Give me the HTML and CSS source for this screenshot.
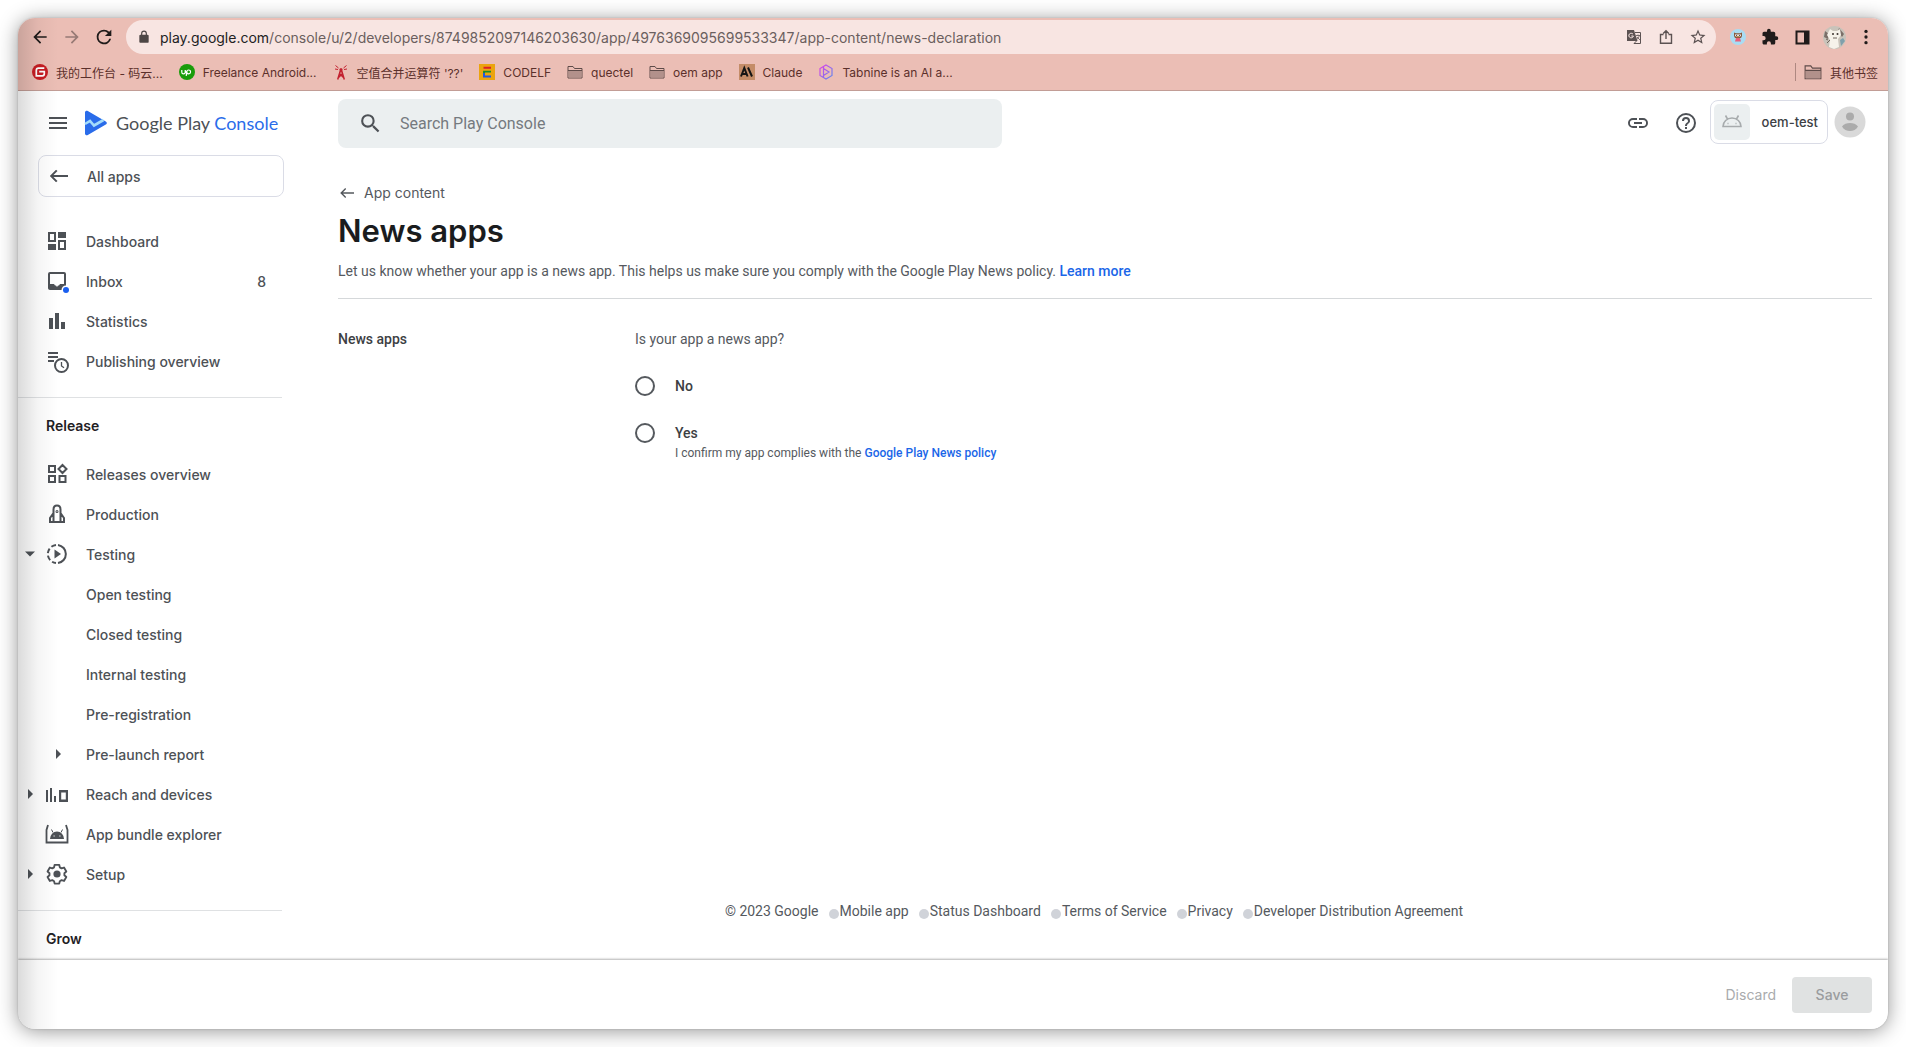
FILE: index.html
```html
<!DOCTYPE html>
<html lang="en">
<head>
    <meta charset="UTF-8">
    <meta name="viewport" content="width=device-width, initial-scale=1.0">
    <title>News apps | Google Play Console</title>
    <link rel="stylesheet" href="styles.css">
</head>
<body>
<div class="window">

    <!-- Browser toolbar -->
    <div class="browser">
        <div class="toolbar">
            <button class="tool" aria-label="Back"><svg width="20" height="20" viewBox="0 0 24 24"><path d="M20 11H7.830l5.590-5.590L12 4l-8 8 8 8 1.410-1.410L7.830 13H20z"/></svg></button>
            <button class="tool tool-off" aria-label="Forward"><svg width="20" height="20" viewBox="0 0 24 24"><path d="M12 4l-1.410 1.410L16.170 11H4v2h12.170l-5.580 5.590L12 20l8-8z"/></svg></button>
            <button class="tool" aria-label="Reload"><svg width="22" height="22" viewBox="0 0 24 24"><path d="M17.650 6.350A7.960 7.960 0 0 0 12 4a8 8 0 1 0 7.730 10h-2.080A6 6 0 1 1 12 6c1.660 0 3.140.69 4.220 1.780L13 11h7V4z"/></svg></button>
            <div class="address">
                <svg class="lock" width="14" height="14" viewBox="0 0 24 24"><path d="M18 8h-1V6A5 5 0 0 0 7 6v2H6a2 2 0 0 0-2 2v10c0 1.100.9 2 2 2h12a2 2 0 0 0 2-2V10a2 2 0 0 0-2-2zM9 6a3 3 0 0 1 6 0v2H9z"/></svg>
                <div class="url" role="textbox" aria-label="Address"><span class="host">play.google.com</span>/console/u/2/developers/8749852097146203630/app/4976369095699533347/app-content/news-declaration</div>
                <button class="tool tool-soft" aria-label="Translate">
                    <svg width="16" height="16" viewBox="0 0 16 16">
                        <path d="M1 1h7l3.500 11H1z"/>
                        <path d="M9 3.500h5.500v11H8l2.500-2.500" fill="none" stroke="#5c5252"/>
                        <path d="M10 6.500h4M12 5.500v1M13.300 6.500c-.4 1.800-1.300 3-2.300 3.800M11 8l3 3" fill="none" stroke="#5c5252" stroke-width=".8"/>
                        <path d="M7 5.200A2.300 2.300 0 1 0 7.400 7H5.300" fill="none" stroke="#f8e5e2"/>
                    </svg>
                </button>
                <button class="tool tool-soft" aria-label="Share"><svg width="16" height="16" viewBox="0 0 16 16" fill="none" stroke="#5c5252" stroke-width="1.400"><path d="M5.500 5.500h-3v8.700h11V5.500h-3M8 10V2M5.200 4.500L8 1.700l2.800 2.800"/></svg></button>
                <button class="tool tool-soft" aria-label="Bookmark"><svg width="18" height="18" viewBox="0 0 24 24"><path d="M22 9.240l-7.190-.62L12 2 9.190 8.630 2 9.240l5.460 4.730L5.820 21 12 17.270 18.180 21l-1.630-7.030zM12 15.400l-3.760 2.270 1-4.280-3.320-2.880 4.380-.38L12 6.100l1.710 4.040 4.380.38-3.320 2.880 1 4.280z"/></svg></button>
            </div>
            <button class="tool" aria-label="Extension">
                <svg width="16" height="16" viewBox="0 0 16 16">
                    <circle cx="8" cy="8" r="8" fill="#a9dcf3"/>
                    <path d="M4 3.500l2 .8h4l2-.8v3.500l-1 2H5L4 7z" fill="#8a5a3c"/>
                    <circle cx="6.500" cy="6.200" r="1.300" fill="#fff"/><circle cx="9.500" cy="6.200" r="1.300" fill="#fff"/>
                    <circle cx="6.500" cy="6.200" r=".6"/><circle cx="9.500" cy="6.200" r=".6"/>
                    <path d="M6 9h4l1 3.500H5z" fill="#e8607a"/><path d="M7.300 7.300h1.400L8 8.500z" fill="#f4b942"/>
                </svg>
            </button>
            <button class="tool" aria-label="Extensions"><svg width="18" height="18" viewBox="0 0 24 24"><path d="M20.500 11H19V7a2 2 0 0 0-2-2h-4V3.500a2.500 2.500 0 0 0-5 0V5H4a2 2 0 0 0-2 2v3.800h1.500a2.700 2.700 0 0 1 0 5.400H2V20c0 1.100.9 2 2 2h3.800v-1.500a2.700 2.700 0 0 1 5.400 0V22H17a2 2 0 0 0 2-2v-4h1.500a2.500 2.500 0 0 0 0-5z"/></svg></button>
            <button class="tool" aria-label="Side panel"><svg width="15" height="15" viewBox="0 0 15 15"><path d="M.500 .500h14v14H.500zM2.500 2.500v10h6.500v-10z" fill-rule="evenodd"/></svg></button>
            <button class="tool" aria-label="Profile">
                <svg width="23" height="23" viewBox="0 0 23 23">
                    <circle cx="11.500" cy="11.500" r="11.500" fill="#c9c3ba"/>
                    <path d="M2 5l4 3-1 5-4-2zM16 2l5 6-2 3-4-6z" fill="#7b6f68"/>
                    <path d="M20 12l2 3-4 5-1-6z" fill="#7fa0ac"/>
                    <path d="M7 3l3 2h4l3-2 1 6-3 4 1 8-5 2-5-2 1-7-3-5z" fill="#f6f2ea"/>
                    <circle cx="10" cy="8" r="1" fill="#3b332e"/><circle cx="14.500" cy="8" r="1" fill="#3b332e"/>
                    <path d="M10 12h4M4 17l3-3M3 13l2 1" stroke="#6f655c" stroke-width="1"/>
                </svg>
            </button>
            <button class="tool" aria-label="Menu"><svg width="18" height="18" viewBox="0 0 24 24"><circle cx="12" cy="4.500" r="2.200"/><circle cx="12" cy="12" r="2.200"/><circle cx="12" cy="19.500" r="2.200"/></svg></button>
        </div>

        <nav class="bookmarks">
            <a href="#">
                <svg width="16" height="16" viewBox="0 0 16 16"><circle cx="8" cy="8" r="8" fill="#c71d23"/><path d="M12.300 4.200H6.600a2.300 2.300 0 0 0-2.300 2.300v5.300h6a2 2 0 0 0 2-2V7.700H7.200" fill="none" stroke="#fff" stroke-width="1.700"/></svg>
                我的工作台 - 码云...
            </a>
            <a href="#">
                <svg width="16" height="16" viewBox="0 0 16 16"><circle cx="8" cy="8" r="8" fill="#1a9c0a"/><path d="M2.800 6v2.200a1.700 1.700 0 0 0 3.400 0V6M6.200 6.500c1 2.500 2 3.300 3.400 3.300a1.900 1.900 0 1 0-1.800-2.200L7.200 12" fill="none" stroke="#fff" stroke-width="1.200"/></svg>
                Freelance Android...
            </a>
            <a href="#">
                <svg width="16" height="16" viewBox="0 0 16 16" fill="none" stroke="#c3202f"><path d="M8 4.500L4.700 15.500M8 4.500l3.300 11M6.500 9.500l4 4M9.500 9.500l-4 4" stroke-width="1.500"/><path d="M6.500 5.500h3M7 7.500h2" stroke-width="1.500"/><path d="M5.500 4L2.500 1.500M10.500 4l3-2.500M5 5.500L2 5M11 5.500l3-.5"/></svg>
                空值合并运算符 '??'
            </a>
            <a href="#">
                <svg width="16" height="16" viewBox="0 0 16 16"><path d="M0 0h16v16H0z" fill="#eba40f"/><path d="M4.500 3.800H12" stroke="#dd1f26" stroke-width="2"/><path d="M12 7.600H5v2" fill="none" stroke="#178a2c" stroke-width="1.800"/><path d="M5 9v3.400h7" fill="none" stroke="#2157e0" stroke-width="2"/></svg>
                CODELF
            </a>
            <a href="#">
                <svg width="16" height="16" viewBox="0 0 16 16"><path d="M1 14V2.500h5l1.500 2H15V14z" fill="none" stroke="#5e4b49"/><path d="M1.500 6.500h13v7h-13z" fill="#b2918b"/><path d="M1 6.500h14" stroke="#5e4b49"/></svg>
                quectel
            </a>
            <a href="#">
                <svg width="16" height="16" viewBox="0 0 16 16"><path d="M1 14V2.500h5l1.500 2H15V14z" fill="none" stroke="#5e4b49"/><path d="M1.500 6.500h13v7h-13z" fill="#b2918b"/><path d="M1 6.500h14" stroke="#5e4b49"/></svg>
                oem app
            </a>
            <a href="#">
                <svg width="16" height="16" viewBox="0 0 16 16"><path d="M0 0h16v16H0z" fill="#c48c68"/><path d="M2 12.500L5.300 4l3.300 8.500M3.300 10h4M9 3.500l4 9" fill="none" stroke="#141414" stroke-width="2"/></svg>
                Claude
            </a>
            <a href="#">
                <svg width="16" height="16" viewBox="0 0 16 16" fill="none"><defs><linearGradient id="tab" x1="0" y1="0" x2="1" y2="1"><stop offset="0" stop-color="#e03be8"/><stop offset="1" stop-color="#5b8dee"/></linearGradient></defs><path d="M8 1l6 3.500v7L8 15l-6-3.500v-7zM5.500 3v10M5.500 4.500L11 8l-5.500 3.500" stroke="url(#tab)" stroke-width="1.200"/></svg>
                Tabnine is an AI a...
            </a>
            <a class="other" href="#">
                <svg width="18" height="18" viewBox="0 0 16 16"><path d="M1 14V2.500h5l1.500 2H15V14z" fill="none" stroke="#5e4b49"/><path d="M1.500 6.500h13v7h-13z" fill="#b2918b"/><path d="M1 6.500h14" stroke="#5e4b49"/></svg>
                其他书签
            </a>
        </nav>
    </div>

    <!-- Console header -->
    <header class="header">
        <div class="brand">
            <button class="icon-btn" aria-label="Main menu"><svg width="20" height="20" viewBox="0 0 20 20"><path d="M1 4h18v2H1zM1 9h18v2H1zM1 14h18v2H1z"/></svg></button>
            <a class="logo" href="#">
                <svg width="24" height="26" viewBox="0 0 24 26"><path d="M1 2.500C1 1 2.500.3 3.800 1l18 10.400c1.400.8 1.400 2.400 0 3.200L3.800 25C2.500 25.700 1 25 1 23.500z" fill="#2a6cea"/><path d="M1 14l5-3 4 4.500L19.500 10" fill="none" stroke="#a3dcfb" stroke-width="2.600"/></svg>
                <span>Google Play <b>Console</b></span>
            </a>
        </div>
        <label class="search">
            <svg width="25" height="25" viewBox="0 0 24 24"><path d="M15.500 14h-.79l-.28-.27A6.470 6.470 0 0 0 16 9.500 6.500 6.500 0 1 0 9.500 16c1.610 0 3.090-.59 4.230-1.570l.27.28v.79l5 4.990L20.490 19zm-6 0a4.500 4.500 0 1 1 0-9 4.500 4.500 0 0 1 0 9z"/></svg>
            <input type="text" placeholder="Search Play Console" aria-label="Search Play Console">
        </label>
        <div class="header-tools">
            <button class="icon-btn" aria-label="Copy link"><svg width="24" height="24" viewBox="0 0 24 24"><path d="M3.900 12A3.100 3.100 0 0 1 7 8.900h4V7H7a5 5 0 0 0 0 10h4v-1.900H7A3.100 3.100 0 0 1 3.900 12zM8 13h8v-2H8zm9-6h-4v1.900h4a3.100 3.100 0 0 1 0 6.200h-4V17h4a5 5 0 0 0 0-10z"/></svg></button>
            <button class="icon-btn" aria-label="Help"><svg width="24" height="24" viewBox="0 0 24 24"><path d="M11 18h2v-2h-2zm1-16a10 10 0 1 0 0 20 10 10 0 0 0 0-20zm0 18a8 8 0 1 1 0-16 8 8 0 0 1 0 16zm0-14a4 4 0 0 0-4 4h2a2 2 0 1 1 4 0c0 2-3 1.750-3 5h2c0-2.250 3-2.500 3-5a4 4 0 0 0-4-4z"/></svg></button>
            <div class="account">
                <button class="app-picker">
                    <span class="app-icon"><svg width="24" height="24" viewBox="0 0 24 24" fill="none" stroke="#a7abad" stroke-width="1.600"><path d="M3 16.500a9 8.500 0 0 1 18 0zM7.500 9L5.500 5.500M16.500 9l2-3.500"/><path d="M7.500 13.500h1M15.500 13.500h1"/></svg></span>
                    oem-test
                </button>
                <button class="avatar" aria-label="Account"><svg width="32" height="32" viewBox="0 0 32 32"><circle cx="16" cy="16" r="15.500" fill="#d9d9d9"/><circle cx="16" cy="10.500" r="4" fill="#ababab"/><path d="M8 20.500c1.500-2.500 5-3.500 8-3.500s6.500 1 8 3.500c-1.500 3-5 4.500-8 4.500s-6.500-1.500-8-4.500z" fill="#ababab"/></svg></button>
            </div>
        </div>
    </header>

    <div class="page">
        <nav class="sidebar">
            <a class="all-apps" href="#"><svg width="20" height="20" viewBox="0 0 20 20"><path d="M19 9H4.500l4-4L7 3.700 .800 10 7 16.300l1.500-1.300-4-4H19z"/></svg>All apps</a>

            <ul class="menu">
                <li><a href="#"><span class="arrow"></span><svg width="24" height="24" viewBox="0 0 24 24"><path d="M3 3h8v10H3zM5 5v6h4V5zM13 3h8v6h-8zM3 15h8v6H3zM13 11h8v10h-8zM15 13v6h4v-6z" fill-rule="evenodd"/></svg>Dashboard</a></li>
                <li><a href="#"><span class="arrow"></span><svg width="24" height="24" viewBox="0 0 24 24"><path d="M19 3H5a2 2 0 0 0-2 2v14c0 1.100.9 2 2 2h14a2 2 0 0 0 2-2V5a2 2 0 0 0-2-2zM5 5h14v10h-4l-1 1.500h-1L12 18l-1-1.500h-1L9 15H5z" fill-rule="evenodd"/><circle cx="21" cy="21" r="4.500" fill="#fff"/><circle cx="21" cy="21" r="3" fill="#1a5ff0"/></svg>Inbox<span class="count">8</span></a></li>
                <li><a href="#"><span class="arrow"></span><svg width="24" height="24" viewBox="0 0 24 24"><path d="M4 9h4v11H4zM10 4h4v16h-4zM16 13h4v7h-4z"/></svg>Statistics</a></li>
                <li><a href="#"><span class="arrow"></span><svg width="24" height="24" viewBox="0 0 24 24"><path d="M3 3h10v2H3zM3 7h10v2H3zM3 11h6v2H3z"/><circle cx="16.500" cy="16.500" r="6.500" fill="#fff" stroke="#4d5156" stroke-width="2"/><path d="M16.500 13v4l2.500 1.800" fill="none" stroke="#4d5156" stroke-width="1.300"/></svg>Publishing overview</a></li>
            </ul>

            <h2>Release</h2>
            <ul class="menu">
                <li><a href="#"><span class="arrow"></span><svg width="24" height="24" viewBox="0 0 24 24" fill="none" stroke="#4d5156" stroke-width="2"><path d="M4 4h6v6H4zM4 14h6v6H4zM14.500 14h6v6h-6zM17.500 3l4 4-4 4-4-4z"/></svg>Releases overview</a></li>
                <li><a href="#"><span class="arrow"></span><svg width="24" height="24" viewBox="0 0 24 24" fill="none" stroke="#4d5156" stroke-width="2"><path d="M8.500 20V7.500C8.500 5 10 3.500 12 3.500S15.500 5 15.500 7.500V20zM8.500 11L5 16v4h14v-4l-3.500-5"/><circle cx="12" cy="9.500" r=".5"/></svg>Production</a></li>
                <li><a href="#"><span class="arrow open"></span><svg width="24" height="24" viewBox="0 0 24 24"><path d="M13 2.900a9.200 9.200 0 0 1 0 18.200" fill="none" stroke="#4d5156" stroke-width="2"/><path d="M11 2.900a9.200 9.200 0 0 0-8.200 9.100A9.200 9.200 0 0 0 11 21.100" fill="none" stroke="#4d5156" stroke-width="2" stroke-dasharray="5 2.500"/><path d="M9.500 7.500v9l6.500-4.500z"/></svg>Testing</a></li>
                <li><a class="sub" href="#">Open testing</a></li>
                <li><a class="sub" href="#">Closed testing</a></li>
                <li><a class="sub" href="#">Internal testing</a></li>
                <li><a class="sub" href="#">Pre-registration</a></li>
                <li><a class="nested" href="#"><span class="arrow closed"></span>Pre-launch report</a></li>
                <li><a href="#"><span class="arrow closed"></span><svg width="24" height="24" viewBox="0 0 24 24"><path d="M1 8h2v12H1zM5 6h2v14H5zM9 14h2v6H9zM14 8h9v12h-9zM16.200 10.500v7h4.600v-7z" fill-rule="evenodd"/></svg>Reach and devices</a></li>
                <li><a href="#"><span class="arrow"></span><svg width="24" height="24" viewBox="0 0 24 24"><path d="M3 3l-1.500 5v12.500h21V8L21 3" fill="none" stroke="#4d5156" stroke-width="1.800"/><path d="M5 17a7 7.500 0 0 1 14 0z"/><path d="M8 10.500L6.500 7.500M16 10.500l1.500-3" stroke="#4d5156"/><path d="M8.500 14h1.200M14.300 14h1.200" stroke="#fff"/></svg>App bundle explorer</a></li>
                <li><a href="#"><span class="arrow closed"></span><svg width="24" height="24" viewBox="0 0 24 24"><path d="M9.500 2.500h5l.6 2.800 1.900 1.100 2.700-.9 2.500 4.300-2.100 1.900v2.200l2.100 1.900-2.500 4.300-2.700-.9-1.900 1.100-.6 2.700h-5l-.6-2.700L7 19.200l-2.700.9-2.500-4.300 2.100-1.900v-2.200L1.800 9.800l2.500-4.300 2.700.9 1.900-1.100z" fill="none" stroke="#4d5156" stroke-width="2" stroke-linejoin="round" transform="translate(.9 .5) scale(.92)"/><circle cx="12" cy="12" r="3.600"/></svg>Setup</a></li>
            </ul>

            <h2>Grow</h2>
        </nav>

        <main class="main">
            <a class="crumb" href="#"><svg width="18" height="16" viewBox="0 0 18 16"><path d="M16 7.300H5l3.200-3.200L7.200 3 2.200 8l5 5 1-1.100L5 8.700h11z"/></svg>App content</a>
            <h1>News apps</h1>
            <p class="intro">Let us know whether your app is a news app. This helps us make sure you comply with the Google Play News policy. <a href="#">Learn more</a></p>

            <form class="declaration">
                <h3>News apps</h3>
                <fieldset>
                    <legend>Is your app a news app?</legend>
                    <div class="option">
                        <input type="radio" name="news" id="news-no">
                        <label for="news-no">No</label>
                    </div>
                    <div class="option">
                        <input type="radio" name="news" id="news-yes">
                        <label for="news-yes">Yes</label>
                        <p class="hint">I confirm my app complies with the <a href="#">Google Play News policy</a></p>
                    </div>
                </fieldset>
            </form>

            <footer class="footer">
                <span>© 2023 Google</span>
                <a href="#">Mobile app</a>
                <a href="#">Status Dashboard</a>
                <a href="#">Terms of Service</a>
                <a href="#">Privacy</a>
                <a href="#">Developer Distribution Agreement</a>
            </footer>
        </main>
    </div>

    <div class="actions">
        <button class="discard" disabled>Discard</button>
        <button class="save" disabled>Save</button>
    </div>
</div>
</body>
</html>
```
FILE: styles.css
```css
* {
    box-sizing: border-box;
}

body {
    margin: 0;
    padding: 18px;
    height: 100vh;
    background: #fff;
    font-family: Roboto, "Noto Sans CJK SC", sans-serif;
    font-size: 14px;
    color: #55595e;
}

a {
    color: inherit;
    text-decoration: none;
}

button {
    padding: 0;
    border: none;
    background: none;
    font: inherit;
    color: inherit;
}

svg {
    display: block;
    flex: none;
    fill: currentColor;
}

svg[fill="none"] {
    fill: none;
}

.window {
    position: relative;
    display: flex;
    flex-direction: column;
    height: 100%;
    background: #fff;
    border-radius: 17px;
    overflow: hidden;
    box-shadow: 0 2px 20px rgba(0, 0, 0, 0.42), 0 0 2px rgba(0, 0, 0, 0.2);
}

/* soft shade along the left edge */
.window::after {
    content: "";
    position: absolute;
    top: 0;
    bottom: 0;
    left: 0;
    width: 40px;
    background: linear-gradient(to right, rgba(0, 0, 0, 0.14), rgba(0, 0, 0, 0.04) 50%, transparent);
    pointer-events: none;
}

/* browser */
.browser {
    background: #ebbeb5;
    border-bottom: 1px solid #c29d96;
    color: #1f1b1a;
}

.toolbar {
    display: flex;
    align-items: center;
    padding: 2px 6px 0;
}

.tool {
    display: flex;
    align-items: center;
    justify-content: center;
    width: 32px;
    height: 34px;
}

.tool-off {
    color: #977a75;
}

.tool-soft {
    color: #5c5252;
}

.address {
    display: flex;
    align-items: center;
    flex: 1;
    min-width: 0;
    height: 34px;
    margin: 0 6px;
    padding: 0 2px 0 11px;
    background: #f8e5e2;
    border-radius: 17px;
}

.lock {
    color: #4d4645;
}

.url {
    flex: 1;
    min-width: 0;
    margin-left: 9px;
    overflow: hidden;
    white-space: nowrap;
    font-family: Inter, sans-serif;
    font-size: 14px;
    color: #6b5f5e;
}

.host {
    color: #222;
}

.bookmarks {
    display: flex;
    align-items: center;
    gap: 16px;
    height: 36px;
    padding: 0 10px 0 14px;
    font-family: Inter, "Noto Sans CJK SC", sans-serif;
    font-size: 12px;
    color: #5b302b;
    white-space: nowrap;
}

.bookmarks a {
    display: flex;
    align-items: center;
    gap: 8px;
}

.bookmarks .other {
    margin-left: auto;
    padding-left: 8px;
    border-left: 1px solid #ae8881;
}

/* console header */
.header {
    display: flex;
    align-items: center;
    height: 64px;
    padding-right: 22px;
    color: #4d5156;
}

.brand {
    display: flex;
    align-items: center;
    gap: 16px;
    width: 320px;
    padding-left: 30px;
}

.logo {
    display: flex;
    align-items: center;
    gap: 8px;
    font-family: Lato, sans-serif;
    font-size: 18px;
    white-space: nowrap;
}

.logo b {
    font-weight: 400;
    color: #2a6cea;
}

.search {
    display: flex;
    align-items: center;
    flex: 0 1 664px;
    height: 49px;
    padding-left: 20px;
    background: #ebeff0;
    border-radius: 8px;
}

.search input {
    flex: 1;
    margin-left: 17px;
    padding: 0;
    border: none;
    outline: none;
    background: none;
    font-family: Roboto, sans-serif;
    font-size: 16px;
    color: #3c4043;
}

.search input::placeholder {
    color: #757a7f;
}

.header-tools {
    display: flex;
    align-items: center;
    gap: 24px;
    margin-left: auto;
}

.account {
    display: flex;
    align-items: center;
    gap: 6px;
    margin: 0 0 3px -12px;
}

.app-picker {
    display: flex;
    align-items: center;
    gap: 12px;
    height: 44px;
    padding: 0 9px 0 3px;
    border: 1px solid #dadce6;
    border-radius: 8px;
    font-family: Inter, sans-serif;
    font-size: 13px;
    font-weight: 500;
    color: #3c4043;
}

.app-icon {
    display: grid;
    place-items: center;
    width: 36px;
    height: 36px;
    background: #ebeff0;
    border-radius: 5px;
}

/* layout under the header */
.page {
    display: flex;
    flex: 1;
    min-height: 0;
    overflow: hidden;
}

.sidebar {
    flex: none;
    width: 282px;
    overflow: hidden;
    font-family: Inter, sans-serif;
    font-weight: 500;
    color: #4d5156;
}

.all-apps {
    display: flex;
    align-items: center;
    gap: 18px;
    height: 42px;
    margin: 0 16px 24px 20px;
    padding-left: 10px;
    border: 1px solid #dadce6;
    border-radius: 8px;
}

.menu {
    width: 264px;
    margin: 0;
    padding: 0 0 16px;
    list-style: none;
}

.menu a {
    display: flex;
    align-items: center;
    height: 40px;
    padding: 0 16px 0 7px;
}

.menu svg {
    margin-right: 17px;
    overflow: visible;
}

.menu .sub {
    padding-left: 68px;
}

.menu .nested {
    padding-left: 35px;
}

.arrow {
    width: 10px;
    height: 10px;
    margin-right: 10px;
}

.nested .arrow {
    margin-right: 23px;
}

.closed,
.open {
    background: #4d5156;
}

.closed {
    clip-path: polygon(30% 0, 80% 50%, 30% 100%);
}

.open {
    clip-path: polygon(0 25%, 100% 25%, 50% 75%);
}

.count {
    margin-left: auto;
}

.sidebar h2 {
    width: 264px;
    margin: 0;
    padding-left: 28px;
    border-top: 1px solid #dfe1e3;
    font-size: 14px;
    font-weight: 600;
    line-height: 56px;
    color: #1f2124;
}

.main {
    display: flex;
    flex-direction: column;
    flex: 1;
    min-width: 0;
    padding: 26px 16px 38px 38px;
}

.main p a {
    font-weight: 500;
    color: #1a66e8;
}

.crumb {
    display: flex;
    align-items: center;
    gap: 8px;
    line-height: 24px;
    font-family: Inter, sans-serif;
}

h1 {
    margin: 6px 0 0;
    font-family: Inter, sans-serif;
    font-size: 31px;
    font-weight: 600;
    line-height: 40px;
    color: #1a1c1e;
}

.intro {
    margin: 0;
    padding: 8px 0 15px;
    border-bottom: 1px solid #d5d8da;
    line-height: 24px;
}

.declaration {
    display: flex;
    padding-top: 28px;
}

.declaration h3 {
    width: 297px;
    margin: 0;
    font-size: 14px;
    font-weight: 500;
    line-height: 24px;
    color: #3c4043;
}

fieldset {
    min-width: 0;
    margin: 0;
    padding: 0;
    border: none;
}

legend {
    padding: 0;
    line-height: 24px;
}

.option {
    display: grid;
    grid-template-columns: 20px auto;
    align-items: center;
    column-gap: 20px;
    margin-top: 23px;
    line-height: 24px;
}

.option label {
    font-weight: 500;
    color: #3c4043;
}

.option input {
    appearance: none;
    width: 20px;
    height: 20px;
    margin: 0;
    border: 2px solid #55595e;
    border-radius: 50%;
}

.option input:checked {
    background: radial-gradient(#1a66e8 50%, transparent 55%);
    border-color: #1a66e8;
}

.hint {
    grid-column: 2;
    margin: 0;
    font-size: 12px;
    line-height: 16px;
}

.footer {
    display: flex;
    justify-content: center;
    margin: auto -16px 0 -38px;
    line-height: 22px;
}

.footer a {
    display: flex;
    align-items: center;
}

.footer a::before {
    content: "";
    width: 10px;
    height: 10px;
    margin: 6px 1px 0 10px;
    border-radius: 50%;
    background: #d0d3d9;
}

/* save bar */
.actions {
    display: flex;
    align-items: center;
    justify-content: flex-end;
    gap: 16px;
    height: 69px;
    padding-right: 16px;
    background: #fff;
    box-shadow: 0 -1px 2px rgba(0, 0, 0, 0.3);
    font-family: Inter, sans-serif;
    color: #a9abad;
}

.save {
    width: 80px;
    height: 36px;
    border-radius: 4px;
    background: #e0e2e2;
    font-weight: 500;
    color: #9a9c9e;
}
```
